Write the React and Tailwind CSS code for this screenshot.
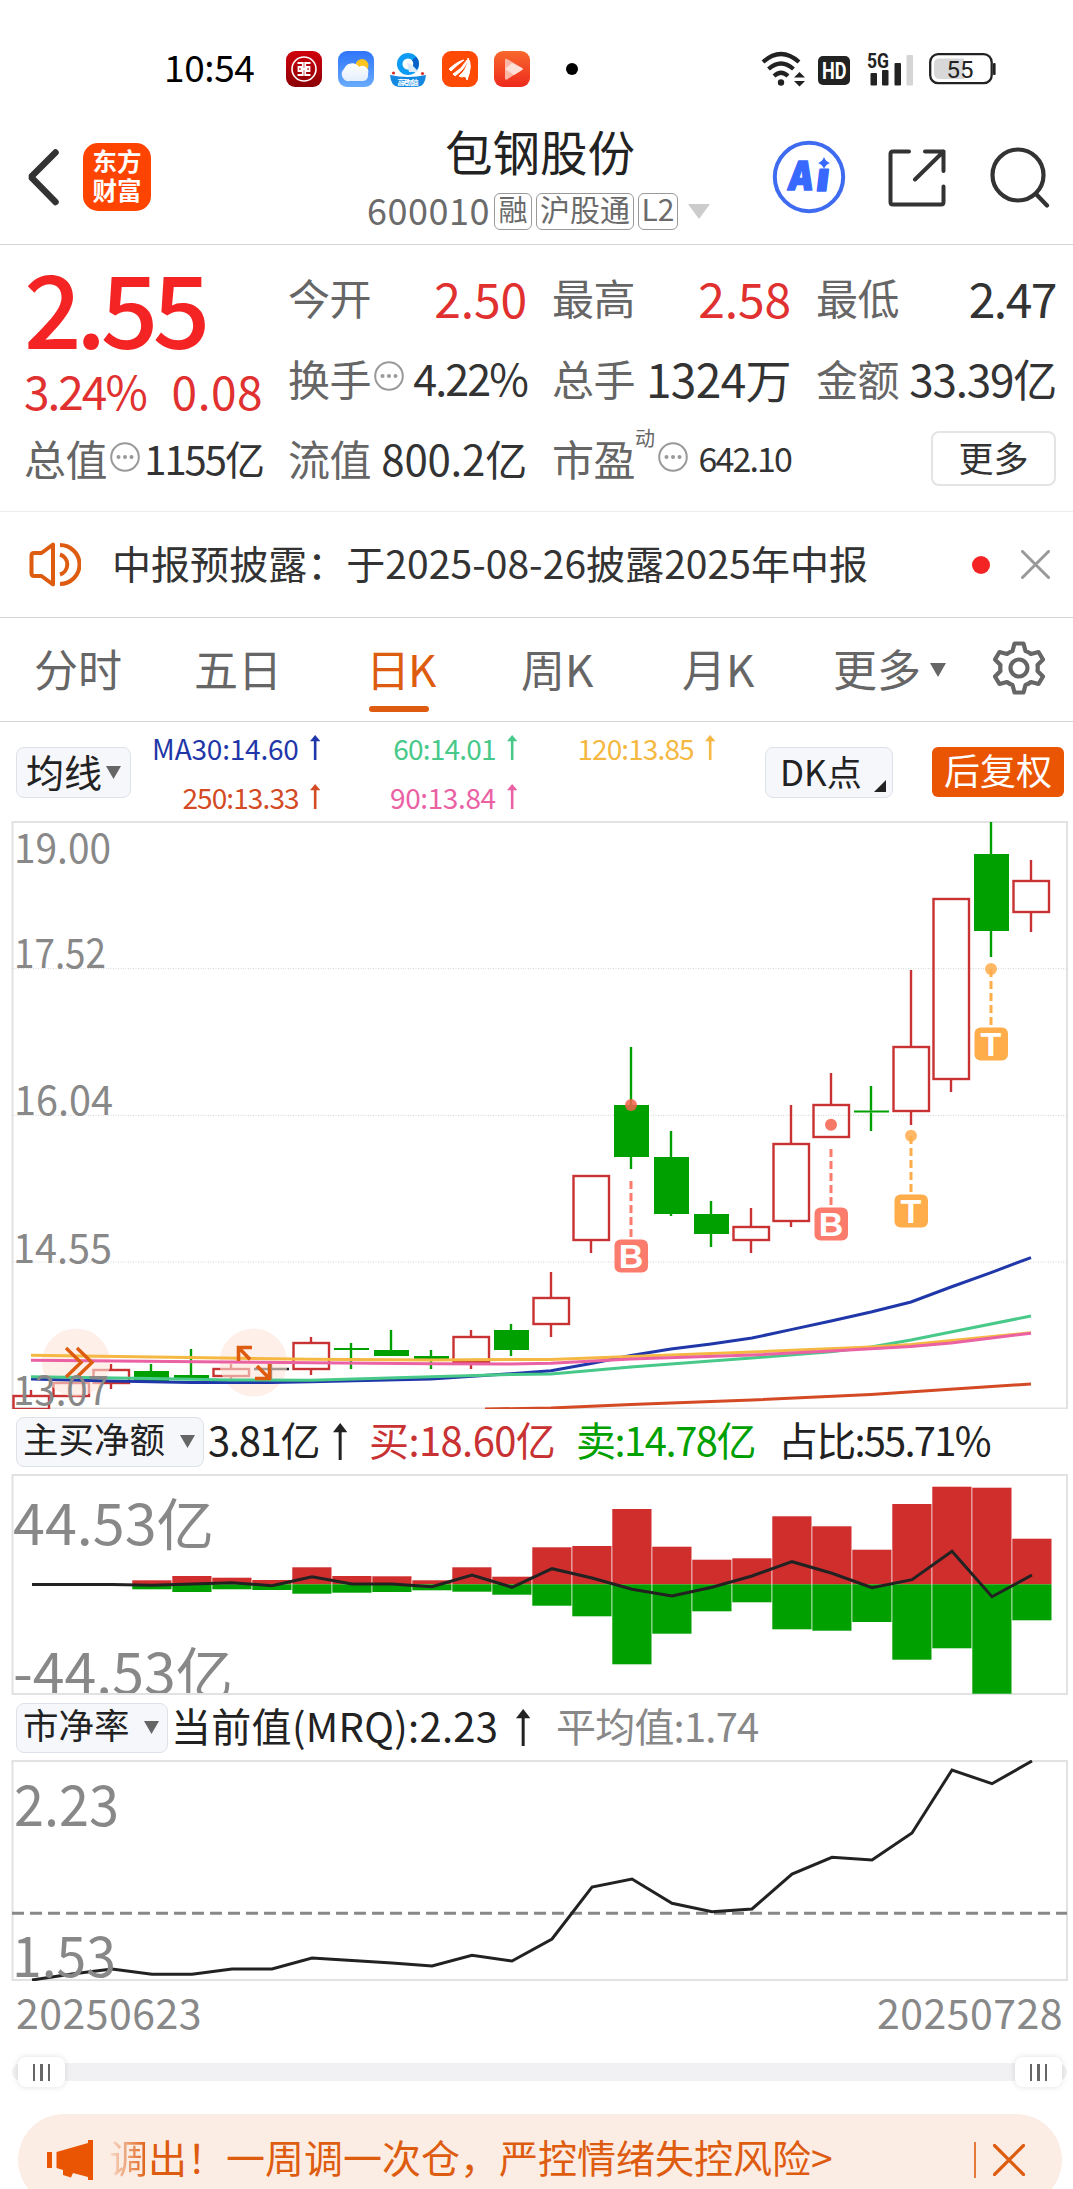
import React from 'react'

// x of a candle centre inside the 1073px wide charts
const cx = (i) => 31 + i * 40

// [type, bodyTop, bodyBottom, high, low]
const candles = [
  ['r', 1396, 1409, 1390, 1409],
  ['r', 1383, 1396, 1383, 1400],
  ['r', 1370, 1383, 1364, 1389],
  ['g', 1371, 1382, 1364, 1383],
  ['g', 1375, 1380, 1349, 1380],
  ['r', 1369, 1376, 1364, 1379],
  ['k', 1369, 1369, 1364, 1379],
  ['r', 1343, 1369, 1337, 1375],
  ['g', 1348, 1350, 1343, 1369],
  ['g', 1350, 1356, 1330, 1356],
  ['g', 1356, 1360, 1350, 1369],
  ['r', 1337, 1362, 1330, 1369],
  ['g', 1330, 1350, 1324, 1356],
  ['r', 1298, 1324, 1272, 1337],
  ['r', 1176, 1240, 1176, 1253],
  ['g', 1105, 1157, 1047, 1169],
  ['g', 1157, 1214, 1131, 1216],
  ['g', 1214, 1234, 1201, 1247],
  ['r', 1227, 1240, 1208, 1253],
  ['r', 1144, 1221, 1105, 1227],
  ['r', 1105, 1137, 1073, 1137],
  ['g', 1110.5, 1112.5, 1086, 1131],
  ['r', 1047, 1111, 970, 1125],
  ['r', 899, 1079, 899, 1092],
  ['g', 854, 931, 822, 957],
  ['r', 881, 912, 860, 932],
]

const maLines = [
  ['#d34a24', '485,1409 551,1408 631,1404.5 752,1400 871,1394.5 1031,1384'],
  ['#1f37a8', '31,1379 111,1381 191,1382.5 271,1382.5 311,1381.7 431,1379 511,1373.7 551,1370.7 591,1363.5 631,1355.5 671,1349 711,1344 752,1338 791,1329.6 831,1321 871,1312 911,1302 951,1287 991,1272.6 1031,1257.6'],
  ['#48c98a', '31,1376.7 151,1378.5 231,1380 311,1380.3 431,1376.7 511,1374.5 551,1374 631,1367 711,1361 752,1358 831,1351.7 871,1347 911,1340 951,1332 1031,1316'],
  ['#f5b843', '31,1355.3 171,1357.3 311,1359.3 431,1360 551,1359.4 631,1356.5 752,1352 871,1347 911,1344.6 1031,1332.7'],
  ['#ea61a4', '31,1360.3 171,1361.5 311,1362.7 431,1363.8 511,1364 551,1363.2 631,1359 752,1355 831,1351 911,1346.6 951,1343 1031,1333.2'],
]

const marks = [
  { i: 15, dot: 1105, from: 1181, box: 1239.4, t: 'B', c: '#fb7c6c' },
  { i: 20, dot: 1124.7, from: 1149, box: 1207.4, t: 'B', c: '#fb7c6c' },
  { i: 22, dot: 1135.8, from: 1136, box: 1194.4, t: 'T', c: '#ffac4b' },
  { i: 24, dot: 969, from: 969, box: 1027.6, t: 'T', c: '#ffac4b' },
]

// [index, top, bottom]
const flows = [
  [3, 1580.3, 1589.3], [4, 1576, 1592], [5, 1577.7, 1589.3], [6, 1580, 1590],
  [7, 1567.3, 1593.7], [8, 1576, 1592.7], [9, 1576.3, 1592], [10, 1580.3, 1590.3],
  [11, 1567.3, 1591.7], [12, 1576.7, 1594.7], [13, 1547.3, 1605.7], [14, 1546, 1616.3],
  [15, 1509, 1664.3], [16, 1546.7, 1633.7], [17, 1559.7, 1611.3], [18, 1558.3, 1602.3],
  [19, 1516.3, 1629.3], [20, 1526.3, 1630.7], [21, 1549.7, 1622], [22, 1504, 1659.7],
  [23, 1486.7, 1648.3], [24, 1487.7, 1693.7], [25, 1538.7, 1620.3],
]
const flowLine = [1584.5, 1584.5, 1584.5, 1585.3, 1584, 1582.7, 1585.7, 1576.7, 1584, 1584, 1586.7, 1575, 1587.3, 1568.7, 1578, 1589.3, 1596, 1587.3, 1576, 1561.7, 1573.3, 1587.7, 1579.7, 1551.3, 1596.7, 1575]
const pbLine = [1980, 1974, 1969, 1974.3, 1974.3, 1969, 1969, 1958, 1960.5, 1963, 1966, 1955.3, 1961, 1939, 1887, 1879, 1903.3, 1911.7, 1909, 1874, 1857.3, 1860, 1833, 1770, 1783.7, 1761]
const toPoints = (arr) => arr.map((y, i) => `${cx(i) + 1},${y}`).join(' ')

const AxisText = ({ x, y, w, size, children }) => (
  <text x={x} y={y} fontSize={size} textLength={w} lengthAdjust="spacingAndGlyphs" fill="#888">{children}</text>
)

const UpArrow = ({ h = 24, color = 'currentColor' }) => (
  <svg width={h / 3 + 2} height={h} viewBox={`0 0 ${h / 3 + 2} ${h}`}>
    <path d={`M${h / 6 + 1} ${h}V${h / 5}`} stroke={color} strokeWidth={h > 30 ? 3 : 2.6} />
    <path d={`M0 ${h / 4}L${h / 6 + 1} 0L${h / 3 + 2} ${h / 4}Z`} fill={color} />
  </svg>
)

const Triangle = ({ w = 15, h = 13, color = '#666' }) => (
  <svg width={w} height={h} viewBox="0 0 10 10" preserveAspectRatio="none"><path d="M0 0H10L5 10Z" fill={color} /></svg>
)

const Info = () => (
  <svg className="-mt-[3px] ml-[3px] shrink-0" width="30" height="30" viewBox="0 0 30 30">
    <circle cx="15" cy="15" r="13.8" fill="none" stroke="#999" strokeWidth="2" />
    <circle cx="8.5" cy="15" r="2" fill="#999" /><circle cx="15" cy="15" r="2" fill="#999" /><circle cx="21.5" cy="15" r="2" fill="#999" />
  </svg>
)

const StatusBar = () => (
  <div className="h-[100px] pt-[38px] pl-[164px] flex items-start text-black">
    <div className="h-[62px] flex items-center w-full">
      <span className="w-[122px] text-[37px] font-normal tracking-[-0.400px] whitespace-nowrap -mt-1">10:54</span>
      <div className="flex gap-4">
        <svg width="36" height="36" viewBox="0 0 36 36">
          <defs><linearGradient id="icbc" x2="0" y2="1"><stop stopColor="#d0000d" /><stop offset="1" stopColor="#8b0006" /></linearGradient></defs>
          <rect width="36" height="36" rx="9" fill="url(#icbc)" />
          <circle cx="18" cy="18" r="12" fill="none" stroke="#fff" strokeWidth="1.6" />
          <path d="M11.500 12H16.800V16H12.500V20H16.800V24H11.500M24.500 12H19.200V16H23.500V20H19.200V24H24.500M14.500 18H21.500" fill="none" stroke="#fff" strokeWidth="1.800" />
        </svg>
        <svg width="36" height="36" viewBox="0 0 36 36">
          <defs>
            <linearGradient id="sky" x2="0" y2="1"><stop stopColor="#2f74fa" /><stop offset="1" stopColor="#68abfb" /></linearGradient>
            <linearGradient id="cloud" x2="0" y2="1"><stop stopColor="#fff" /><stop offset="1" stopColor="#e3eefc" /></linearGradient>
          </defs>
          <rect width="36" height="36" rx="9" fill="url(#sky)" />
          <circle cx="24" cy="14.5" r="6.5" fill="#fdc420" />
          <path d="M12 30A7 7 0 0 1 6 18A8.500 8.500 0 0 1 21 16A6 6 0 0 1 30 23A5.500 5.500 0 0 1 25 30Z" fill="url(#cloud)" />
        </svg>
        <svg width="36" height="36" viewBox="0 0 36 36">
          <circle cx="18" cy="13" r="8.300" fill="none" stroke="#0d9cf5" strokeWidth="5.500" />
          <path d="M24 7.500A8.300 8.300 0 0 1 25 17" fill="none" stroke="#0660c8" strokeWidth="5.500" />
          <path d="M17 12Q22 12 28 21H19Z" fill="#dceaf8" />
          <path d="M0 24Q18 28 36 24Q35 36 27 36H9Q1 36 0 24Z" fill="#1488e0" />
          <circle cx="3.500" cy="22" r="1.600" fill="#d9302c" /><circle cx="32.500" cy="22.500" r="1.600" fill="#d9302c" />
          <text x="18" y="33.500" textAnchor="middle" fontSize="7" fontWeight="700" fill="#fff" textLength="21">高考加油</text>
        </svg>
        <svg width="36" height="36" viewBox="0 0 36 36">
          <rect width="36" height="36" rx="9" fill="#ff4a05" />
          <path d="M7 18Q16 10 22 9Q15 14 9 20ZM11 23Q20 18 25 9Q25 16 13 25ZM17 25Q26 18 26 7Q31 14 25 29Q24 24 20 26Z" fill="#fff" stroke="#fff" strokeWidth="1" />
        </svg>
        <svg width="36" height="36" viewBox="0 0 36 36">
          <defs><linearGradient id="play" x2="0" y2="1"><stop stopColor="#f8682d" /><stop offset="1" stopColor="#ee2a1d" /></linearGradient></defs>
          <rect width="36" height="36" rx="9" fill="url(#play)" />
          <path d="M11 9Q11 7 13 8L28 17Q29.500 18 28 19L13 28.500Q11 29.500 11 27Z" fill="#fbb6a6" />
          <path d="M11 18L18 12L28 17Q29.500 18 28 19L20 24Z" fill="#fde0d8" />
        </svg>
      </div>
      <div className="ml-[36px] size-3 rounded-full bg-black" />
      <svg className="ml-[183px]" width="44" height="36" viewBox="0 0 44 36" fill="none" stroke="#222" strokeWidth="4.200">
        <path d="M2 11Q20-5 38 11M7.500 18Q20 7 32.500 18M13 25Q20 18.500 27 25" />
        <circle cx="20" cy="31.500" r="3.200" fill="#222" stroke="none" />
        <path d="M33 26.500L38.500 21L44 26.500ZM33 30L38.500 35.500L44 30Z" fill="#222" stroke="none" />
      </svg>
      <svg className="ml-[13px] mt-0.5" width="32" height="29" viewBox="0 0 32 29">
        <rect width="32" height="29" rx="5" fill="#222" />
        <text x="4" y="22.500" fontFamily="Roboto" fontWeight="700" fontSize="23" fill="#fff" textLength="24.500" lengthAdjust="spacingAndGlyphs">HD</text>
      </svg>
      <svg className="ml-[17px]" width="47" height="36" viewBox="0 0 47 36" fill="#222">
        <text x="0" y="16.500" fontFamily="Roboto" fontWeight="700" fontSize="20" textLength="22" lengthAdjust="spacingAndGlyphs">5G</text>
        <rect x="3.500" y="22" width="6.500" height="12.500" rx="1" /><rect x="15" y="19" width="6.500" height="15.500" rx="1" />
        <rect x="27.500" y="12" width="6.500" height="22.500" rx="1" /><rect x="39.500" y="4" width="6.500" height="30.500" rx="1" fill="#d5d5d5" />
      </svg>
      <svg className="ml-[15px]" width="68" height="32" viewBox="0 0 68 32">
        <rect x="1.200" y="1.200" width="61.500" height="29" rx="8" fill="none" stroke="#222" strokeWidth="2.300" />
        <path d="M11 5.500H35V26H11Q5 26 5 20V11Q5 5.500 11 5.500Z" fill="#d8d8d8" />
        <rect x="64" y="10" width="2.600" height="12" rx="1" fill="#222" />
        <text x="31" y="24.500" textAnchor="middle" fontFamily="Roboto" fontSize="24" fill="#222">55</text>
      </svg>
    </div>
  </div>
)

const Header = () => (
  <div className="h-[145px] border-b border-[#d4d4d4] flex relative">
    <div className="pl-[27px] pt-[43px] flex gap-[24px]">
      <svg className="mt-[6px]" width="32" height="57" viewBox="0 0 32 57"><path d="M28.500 3.500L4 28L28.500 53" fill="none" stroke="#333" strokeWidth="6.500" strokeLinecap="round" strokeLinejoin="bevel" /></svg>
      <div className="w-[68px] h-[68px] rounded-[15px] bg-[#ff4400] text-white font-bold text-[24.500px] leading-[29px] text-center pt-[3px]">东方<br />财富</div>
    </div>
    <div className="absolute left-[367px] top-[17px] w-[350px]">
      <div className="pl-[78px] text-[47.500px] leading-[68px] font-normal text-[#222] whitespace-nowrap">包钢股份</div>
      <div className="mt-[7px] flex items-center h-[38px] text-[#6b6b6b] whitespace-nowrap">
        <span className="w-[127px] text-[36px] leading-none tracking-[0.500px] -mt-1">600010</span>
        <span className="w-[38px] h-[37px] border-[1.500px] border-[#999] rounded-md text-[29px] leading-[29px] text-center">融</span>
        <span className="ml-1 w-[98px] h-[37px] border-[1.500px] border-[#999] rounded-md text-[30px] leading-[29px] text-center">沪股通</span>
        <span className="ml-1 w-[40px] h-[37px] border-[1.500px] border-[#999] rounded-md text-[30px] leading-[29px] text-center">L2</span>
        <span className="ml-[10px]"><Triangle w={22} h={15} color="#ccc" /></span>
      </div>
    </div>
    <div className="absolute left-[772px] top-[40px] flex">
      <svg width="74" height="74" viewBox="0 0 74 74">
        <circle cx="37" cy="37" r="34.200" fill="none" stroke="#3e6bf0" strokeWidth="4" />
        <g transform="translate(37 50) skewX(-7) translate(-37 -50)" fontFamily="Inter" fontWeight="900" fontSize="40" fill="#3769ff" stroke="#3769ff" strokeWidth="1.500" strokeLinejoin="round">
          <text x="14.500" y="50" textLength="26" lengthAdjust="spacingAndGlyphs">A</text>
          <text x="43.500" y="51.500" textLength="12.500" lengthAdjust="spacingAndGlyphs">ı</text>
        </g>
        <path d="M52 17Q53.500 21.500 58 23Q53.500 24.500 52 29Q50.500 24.500 46 23Q50.500 21.500 52 17Z" fill="#3769ff" />
      </svg>
      <svg className="ml-[42px] mt-[9px]" width="58" height="58" viewBox="0 0 58 58" fill="none" stroke="#333" strokeWidth="4" strokeLinecap="round" strokeLinejoin="round">
        <path d="M21 2.500H5Q2.500 2.500 2.500 5V53Q2.500 55.500 5 55.500H53Q55.500 55.500 55.500 53V37.500M37 2.500H55.500V22M55.500 2.500L27 30.500" />
      </svg>
      <svg className="ml-[44px] mt-[7px]" width="60" height="61" viewBox="0 0 60 61" fill="none" stroke="#333" strokeWidth="4.200" strokeLinecap="round">
        <circle cx="28" cy="28" r="25.500" /><path d="M46.500 47.500L57 58.500" />
      </svg>
    </div>
  </div>
)

const Cell = ({ label, sup, info, value, valueClass }) => (
  <div className="flex items-center justify-between whitespace-nowrap">
    <span className="flex items-center text-[#666] text-[42px] leading-none tracking-[-0.500px]">
      <span>{label}</span>
      {sup && <span className="text-[20px] -mt-[40px] tracking-normal">{sup}</span>}
      {info && <Info />}
    </span>
    <span className={valueClass}>{value}</span>
  </div>
)

const Quote = () => (
  <div className="h-[267px] border-b border-[#ececec] pl-6 pt-3 grid grid-cols-[239px_239px_239px_240px] grid-rows-[80px_81px_80px] gap-x-[25px] leading-none text-[#333]">
    <div className="row-span-2 text-[#f42424]">
      <div className="h-[96px] text-[101px] font-medium leading-[97px] tracking-[-5.500px]">2.55</div>
      <div className="flex justify-between text-[#e03030] text-[46px] leading-[74px]"><span className="tracking-[-2px]">3.24%</span><span className="tracking-[0.500px]">0.08</span></div>
    </div>
    <Cell label="今开" value="2.50" valueClass="text-[48px] tracking-[-0.100px] text-[#e03030]" />
    <Cell label="最高" value="2.58" valueClass="text-[48px] tracking-[-0.100px] text-[#e03030]" />
    <Cell label="最低" value="2.47" valueClass="text-[48px] tracking-[-1.500px]" />
    <Cell label="换手" info value="4.22%" valueClass="text-[43px] tracking-[-1.900px]" />
    <Cell label="总手" value="1324万" valueClass="text-[46px] tracking-[-0.600px]" />
    <Cell label="金额" value="33.39亿" valueClass="text-[44px] tracking-[-1.200px]" />
    <Cell label="总值" info value="1155亿" valueClass="text-[40px] tracking-[-2px]" />
    <Cell label="流值" value="800.2亿" valueClass="text-[42px] tracking-[-0.200px]" />
    <Cell label="市盈" sup="动" info value="642.10" valueClass="text-[34px] tracking-[-1.900px]" />
    <div className="flex items-center justify-end">
      <div className="w-[125px] h-[55px] border-2 border-[#e4e4e4] rounded-lg text-[35px] leading-[47px] text-center">更多</div>
    </div>
  </div>
)

const Notice = () => (
  <div className="h-[106px] border-b border-[#d4d4d4] flex items-center pl-[29px]">
    <svg width="52" height="45" viewBox="0 0 52 45" fill="none" stroke="#de5c10" strokeWidth="4" strokeLinejoin="round">
      <path d="M24 2.500V42.500L12.500 34H5Q2.500 34 2.500 31V14Q2.500 11 5 11H12.500Z" /><path d="M31 12.500A10.500 10.500 0 0 1 31 32.500M31 3A19.500 19.500 0 0 1 31 42" />
    </svg>
    <span className="ml-[31px] w-[856px] text-[39px] leading-none tracking-[0.050px] text-[#333] whitespace-nowrap -mt-1">中报预披露：于2025-08-26披露2025年中报</span>
    <div className="size-[18px] rounded-full bg-[#f42424] ml-1" />
    <svg className="ml-[31px]" width="29" height="29" viewBox="0 0 29 29"><path d="M1.500 1.500L27.500 27.500M27.500 1.500L1.500 27.500" stroke="#999" strokeWidth="3" strokeLinecap="round" /></svg>
  </div>
)

const Tabs = () => (
  <div className="h-[104px] border-b border-[#d4d4d4] flex items-center pl-[34px] text-[44px] leading-none text-[#666] whitespace-nowrap">
    <span className="w-[160px] -mt-[3px]">分时</span>
    <span className="w-[172px] -mt-[3px]">五日</span>
    <span className="w-[155px] -mt-[3px] text-[#de5c10] tracking-[-2px] relative">日K<i className="absolute left-[3px] bottom-[-22px] w-[60px] h-[6px] rounded-full bg-[#de5c10]" /></span>
    <span className="w-[161px] -mt-[3px]">周K</span>
    <span className="w-[151px] -mt-[3px]">月K</span>
    <span className="w-[97px] -mt-[3px]">更多</span>
    <Triangle w={16} h={14} />
    <svg className="ml-[47px] -mt-1" width="52" height="54" viewBox="0 0 52 54" fill="none" stroke="#666" strokeWidth="4.200" strokeLinejoin="round">
      <path d="M21.500 2.500H30.500L32.500 10Q35.500 11 38 13L45.500 11L50 18.500L44.500 24Q45 27 44.500 30L50 35.500L45.500 43L38 41Q35.500 43 32.500 44L30.500 51.500H21.500L19.500 44Q16.500 43 14 41L6.500 43L2 35.500L7.500 30Q7 27 7.500 24L2 18.500L6.500 11L14 13Q16.500 11 19.500 10Z" />
      <circle cx="26" cy="27" r="8.500" />
    </svg>
  </div>
)

const Ma = ({ children, className }) => (
  <span className={`flex items-center justify-end gap-[11px] text-[28px] leading-none whitespace-nowrap ${className}`}>
    <span>{children}</span><UpArrow h={25} />
  </span>
)

const MaRow = () => (
  <div className="h-[100px] flex pl-4 text-[#222]">
    <div className="mt-[25px] w-[115px] h-[51px] border border-[#dde1e8] bg-[#f6f7fb] rounded-lg flex items-center pl-[9px] gap-1 text-[38px] leading-none whitespace-nowrap"><span className="-mt-1">均线</span><Triangle /></div>
    <div className="mt-[1px] h-[98px] grid grid-cols-[189px_197px_198px] grid-rows-[49px_49px]">
      <Ma className="text-[#1f37a8] tracking-[-0.200px]">MA30:14.60</Ma>
      <Ma className="text-[#48c98a] tracking-[-0.800px]">60:14.01</Ma>
      <Ma className="text-[#f5b843] tracking-[-0.900px]">120:13.85</Ma>
      <Ma className="text-[#d34a24] tracking-[-0.900px]">250:13.33</Ma>
      <Ma className="text-[#ea61a4] tracking-[-0.400px]">90:13.84</Ma>
    </div>
    <div className="ml-[50px] mt-[25px] w-[128px] h-[51px] border border-[#dde1e8] bg-[#f6f7fb] rounded-lg flex items-center pl-[14px] text-[35px] leading-none whitespace-nowrap">
      <span className="w-[94px] -mt-1">DK点</span>
      <svg className="mt-[26px]" width="12" height="12"><path d="M12 0V12H0Z" fill="#222" /></svg>
    </div>
    <div className="ml-[39px] mt-[25px] w-[132px] h-[50px] rounded-md bg-[#ea5504] text-white text-[36px] leading-[45px] text-center">后复权</div>
  </div>
)

const Frame = ({ y, h }) => <rect x="12.500" y={y} width="1054.500" height={h} fill="none" stroke="#e2e2e2" strokeWidth="2" />

const KChart = () => (
  <svg className="block" width="1073" height="588" viewBox="0 821 1073 588">
    <Frame y={822} h={586.5} />
    {[968.7, 1115.3, 1262].map((y) => <path key={y} d={`M13 ${y}H1066`} stroke="#d2d2d2" strokeWidth="1" strokeDasharray="1 1.500" />)}
    {candles.map(([t, a, b, hi, lo], i) => {
      const x = cx(i)
      const color = t === 'r' ? '#c83232' : t === 'g' ? '#00a000' : '#222'
      return (
        <g key={i} stroke={color} strokeWidth="2.400">
          <path d={`M${x} ${hi}V${a}M${x} ${b}V${lo}`} />
          {t === 'r' && <rect x={x - 17.5} y={a} width="35.500" height={b - a} fill="none" />}
          {t === 'g' && <rect x={x - 17} y={a} width="35" height={b - a} fill={color} stroke="none" />}
          {t === 'k' && <path d={`M${x - 17} ${a}H${x + 18}`} />}
        </g>
      )
    })}
    <circle cx="76" cy="1362.500" r="34" fill="#fde4d8" opacity=".6" />
    <circle cx="253.500" cy="1362.500" r="34" fill="#fde4d8" opacity=".6" />
    {maLines.map(([c, p]) => <polyline key={c} points={p} fill="none" stroke={c} strokeWidth="3" />)}
    <path d="M66 1348L81 1362.500L66 1377M77 1348L92 1362.500L77 1377" fill="none" stroke="#de5c10" strokeWidth="3.400" />
    <path d="M238.500 1361V1347.500H252M239 1348L250 1359.500M257 1366L269 1378M269.500 1364V1378.500H255" fill="none" stroke="#de5c10" strokeWidth="3.600" />
    {marks.map((m) => (
      <g key={m.i}>
        <circle cx={cx(m.i)} cy={m.dot} r="6" fill={m.c === '#ffac4b' ? m.c : '#f5604c'} opacity=".85" />
        <path d={`M${cx(m.i)} ${m.from}V${m.box - 2}`} stroke={m.c} strokeWidth="3" strokeDasharray="8 4" />
        <rect x={cx(m.i) - 16.5} y={m.box} width="33.500" height="33" rx="6" fill={m.c} />
        <text x={cx(m.i)} y={m.box + 28.5} textAnchor="middle" fontFamily="Liberation Sans" fontWeight="700" fontSize="34" fill="#fff">{m.t}</text>
      </g>
    ))}
    <AxisText x={14} y={863} w={97} size={41}>19.00</AxisText>
    <AxisText x={14} y={968} w={92} size={41}>17.52</AxisText>
    <AxisText x={14} y={1115} w={99} size={41}>16.04</AxisText>
    <AxisText x={13} y={1262.5} w={99} size={41}>14.55</AxisText>
    <AxisText x={13} y={1405} w={96} size={41}>13.07</AxisText>
  </svg>
)

const Picker = ({ children, className }) => (
  <div className={`h-[50px] border border-[#dde1e8] bg-[#f6f7fb] rounded-lg flex items-center justify-between pl-[6px] pr-[8px] text-[35.500px] leading-none tracking-normal ${className}`}>
    <span className="-mt-[7px]">{children}</span><Triangle />
  </div>
)

const App = () => {
  return (
    <div className="w-[1073px] h-[2189px] overflow-hidden bg-white font-['Noto_Sans_CJK_SC',sans-serif] font-normal">
      <StatusBar />
      <Header />
      <Quote />
      <Notice />
      <Tabs />
      <div className="-mb-[1px]"><MaRow /></div>
      <KChart />

      <div className="h-[65px] flex items-center pl-4 text-[40px] leading-none text-[#222] whitespace-nowrap">
        <Picker className="w-[188px]">主买净额</Picker>
        <span className="ml-[4px] w-[125px] -mt-[5px] tracking-[-1.300px]">3.81亿</span>
        <span className="w-[36px]"><UpArrow h={37} /></span>
        <span className="w-[207px] -mt-[5px] text-[#c83232] tracking-[-0.600px]">买:18.60亿</span>
        <span className="w-[202px] -mt-[5px] text-[#00a000] tracking-[-1.500px]">卖:14.78亿</span>
        <span className="-mt-[5px] tracking-[-1.800px]">占比:55.71%</span>
      </div>
      <svg className="block" width="1073" height="221" viewBox="0 1474 1073 221">
        <Frame y={1475} h={219} />
        {flows.map(([i, t, b]) => (
          <g key={i}>
            <rect x={cx(i) + 1 - 19.7} y={t} width="39.200" height={1584.3 - t} fill="#d02d2d" />
            <rect x={cx(i) + 1 - 19.7} y="1584.300" width="39.200" height={b - 1584.3} fill="#00a000" />
          </g>
        ))}
        <polyline points={toPoints(flowLine)} fill="none" stroke="#222" strokeWidth="3" />
        <AxisText x={13} y={1545} w={201} size={56}>44.53亿</AxisText>
        <g clipPath="url(#flowClip)"><AxisText x={13} y={1693.5} w={220} size={56}>-44.53亿</AxisText></g>
        <clipPath id="flowClip"><rect x="0" y="1600" width="1073" height="93" /></clipPath>
      </svg>

      <div className="h-[65px] flex items-center pl-4 text-[40px] leading-none text-[#222] whitespace-nowrap">
        <Picker className="w-[152px]">市净率</Picker>
        <span className="ml-[3px] w-[345px] -mt-[5px] tracking-[0.300px]">当前值(MRQ):2.23</span>
        <span className="w-[40px]"><UpArrow h={37} /></span>
        <span className="-mt-[5px] text-[#888] tracking-[-0.800px]">平均值:1.74</span>
      </div>
      <svg className="block" width="1073" height="221" viewBox="0 1760 1073 221">
        <Frame y={1761} h={219} />
        <path d="M12 1913.300H1067" stroke="#888" strokeWidth="3" strokeDasharray="12 6" />
        <polyline points={toPoints(pbLine)} fill="none" stroke="#222" strokeWidth="3" />
        <AxisText x={14} y={1825.5} w={105} size={56}>2.23</AxisText>
        <AxisText x={12} y={1976.5} w={104} size={56}>1.53</AxisText>
      </svg>

      <div className="h-[76px] pt-[5px] pl-4 pr-[10px] flex justify-between text-[41px] leading-[50px] tracking-[0.500px] text-[#888]">
        <span>20250623</span>
        <span>20250728</span>
      </div>
      <div className="ml-3 mr-[6px] h-[30px] flex items-center">
        <div className="w-full h-[18px] rounded-full bg-[#f1f1f4] flex items-center justify-between pl-[6px] pr-[5px]">
          {[0, 1].map((k) => (
            <div key={k} className="w-[47px] h-[30px] rounded-lg bg-white shadow-[0_0_6px_rgba(0,0,0,0.12)] flex items-center justify-center gap-[5px]">
              <i className="w-[2.500px] h-[17px] bg-[#666]" /><i className="w-[2.500px] h-[17px] bg-[#666]" /><i className="w-[2.500px] h-[17px] bg-[#666]" />
            </div>
          ))}
        </div>
      </div>

      <div className="mt-[27px] ml-[18px] w-[1044px] h-[92px] rounded-full bg-[#fcede4] flex items-center pl-[29px] text-[#de5c10]">
        <svg width="46" height="40" viewBox="0 0 46 40" fill="#ea5504"><path d="M0 12H5V28H0ZM9.500 12L41 3V0H46V40H41V37L26 33L24 37.500L16 35V30L9.500 28Z" /></svg>
        <div className="ml-[16px] w-[865px] text-[39px] leading-none -mt-2 whitespace-nowrap">
          <span className="bg-linear-to-r from-[#de5c10]/10 to-[#de5c10] bg-clip-text text-transparent">调</span>出！一周调一次仓，严控情绪失控风险&gt;
        </div>
        <div className="w-[2px] h-[36px] bg-[#de5c10]/80" />
        <svg className="ml-[17px]" width="32" height="32" viewBox="0 0 32 32"><path d="M1.500 1.500L30.500 30.500M30.500 1.500L1.500 30.500" stroke="#de5c10" strokeWidth="3.200" strokeLinecap="round" /></svg>
      </div>
    </div>
  )
}

export default App
